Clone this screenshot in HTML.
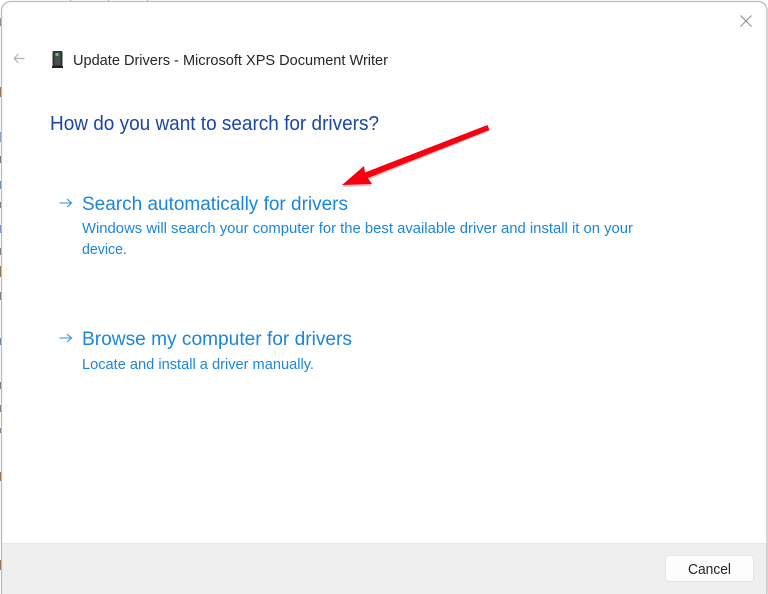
<!DOCTYPE html>
<html>
<head>
<meta charset="utf-8">
<style>
html,body{margin:0;padding:0;background:#fff;width:768px;height:594px;overflow:hidden}
svg{display:block;position:absolute;left:0;top:0;filter:blur(0.3px)}
text{font-family:"Liberation Sans",sans-serif;white-space:pre}
</style>
</head>
<body>
<svg width="768" height="594" viewBox="0 0 768 594" xmlns="http://www.w3.org/2000/svg">
  <defs>
    <clipPath id="win"><rect x="1.5" y="1.5" width="765.5" height="600" rx="9"/></clipPath>
  </defs>
  <rect width="768" height="594" fill="#fff"/>
  <!-- background slivers at left edge -->
  <g>
    <rect x="0" y="18" width="2" height="8" fill="#8a8a8a"/>
    <rect x="0" y="87" width="2" height="10" fill="#8a6a50"/>
    <rect x="0" y="132" width="2" height="10" fill="#7f9fc0"/>
    <rect x="0" y="156" width="2" height="7" fill="#8a6a50"/>
    <rect x="0" y="181" width="2" height="8" fill="#5f8fc0"/>
    <rect x="0" y="202" width="2" height="6" fill="#7a6a70"/>
    <rect x="0" y="225" width="2" height="8" fill="#6f90d0"/>
    <rect x="0" y="248" width="2" height="7" fill="#777"/>
    <rect x="0" y="266" width="2" height="11" fill="#8a6a50"/>
    <rect x="0" y="292" width="2" height="8" fill="#777"/>
    <rect x="0" y="338" width="2" height="7" fill="#6a80a0"/>
    <rect x="0" y="382" width="2" height="7" fill="#777"/>
    <rect x="0" y="405" width="2" height="7" fill="#777"/>
    <rect x="0" y="428" width="2" height="5" fill="#6a80a0"/>
    <rect x="0" y="472" width="2" height="9" fill="#8a6a50"/>
    <rect x="0" y="560" width="2" height="10" fill="#8a6a50"/>
    <rect x="70" y="0" width="1" height="2" fill="#aaa"/>
    <rect x="108" y="0" width="1" height="2" fill="#aaa"/>
    <rect x="147" y="0" width="1" height="2" fill="#aaa"/>
  </g>
  <!-- window -->
  <rect x="1.5" y="1.5" width="765.5" height="600" rx="9" fill="#fff"/>
  <g clip-path="url(#win)">
    <rect x="0" y="543" width="768" height="51" fill="#efefef"/>
    <rect x="0" y="543" width="768" height="1" fill="#e6e6e6"/>
  </g>
  <rect x="1.5" y="1.5" width="765.5" height="600" rx="9" fill="none" stroke="#bcbcbc" stroke-width="1.3"/>

  <!-- close -->
  <path d="M740.5 15.5 L751.5 26.5 M751.5 15.5 L740.5 26.5" stroke="#8c8c8c" stroke-width="1.1" fill="none"/>
  <!-- back arrow -->
  <path d="M14 58.5 H24.5 M14 58.5 L18.5 54 M14 58.5 L18.5 63" stroke="#b0b0b0" stroke-width="1.2" fill="none"/>

  <!-- device icon -->
  <rect x="52.5" y="51" width="10" height="15.5" rx="1.4" fill="#2f3336"/>
  <rect x="54.5" y="52.5" width="6" height="12.5" fill="#4a4f52"/>
  <rect x="55.5" y="53" width="3" height="3" fill="#3ddc4a"/>
  <rect x="52" y="66" width="11" height="2" fill="#1d1f21"/>

  <!-- title -->
  <text x="73" y="65" font-size="14.5" fill="#262626" textLength="315" lengthAdjust="spacingAndGlyphs">Update Drivers - Microsoft XPS Document Writer</text>

  <!-- heading -->
  <text x="50" y="130" font-size="20" fill="#1a46a8" textLength="329" lengthAdjust="spacingAndGlyphs">How do you want to search for drivers?</text>

  <!-- option 1 -->
  <path d="M59.5 203 H71 M67 199 L71.5 203 L67 207" stroke="#2b8fe0" stroke-width="1.1" fill="none"/>
  <text x="82" y="210" font-size="19" fill="#1a86dc" textLength="266" lengthAdjust="spacingAndGlyphs">Search automatically for drivers</text>
  <text x="82" y="233" font-size="14.5" fill="#1a86dc" textLength="551" lengthAdjust="spacingAndGlyphs">Windows will search your computer for the best available driver and install it on your</text>
  <text x="82" y="254" font-size="14.5" fill="#1a86dc" textLength="45" lengthAdjust="spacingAndGlyphs">device.</text>

  <!-- option 2 -->
  <path d="M59.5 338 H71 M67 334 L71.5 338 L67 342" stroke="#2b8fe0" stroke-width="1.1" fill="none"/>
  <text x="82" y="345" font-size="19" fill="#1a86dc" textLength="270" lengthAdjust="spacingAndGlyphs">Browse my computer for drivers</text>
  <text x="82" y="369" font-size="14.5" fill="#1a86dc" textLength="232" lengthAdjust="spacingAndGlyphs">Locate and install a driver manually.</text>

  <!-- red arrow -->
  <path d="M489.5 130 L368 179 L372 185 L342 186 L364 167 L366 173 L488 125.5 Z" fill="#8a8a8a" opacity=".45" transform="translate(0 1)"/>
  <path d="M487.5 125 L365 172.5 L364 166 L342 185 L372 184 L368 178 L489.5 130 Z" fill="#f7000f"/>

  <!-- cancel -->
  <rect x="665.5" y="555.5" width="88" height="26" rx="3" fill="#fdfdfd" stroke="#e4e4e4"/>
  <text x="688" y="574" font-size="14.5" fill="#262626" textLength="43" lengthAdjust="spacingAndGlyphs">Cancel</text>
</svg>
</body>
</html>
